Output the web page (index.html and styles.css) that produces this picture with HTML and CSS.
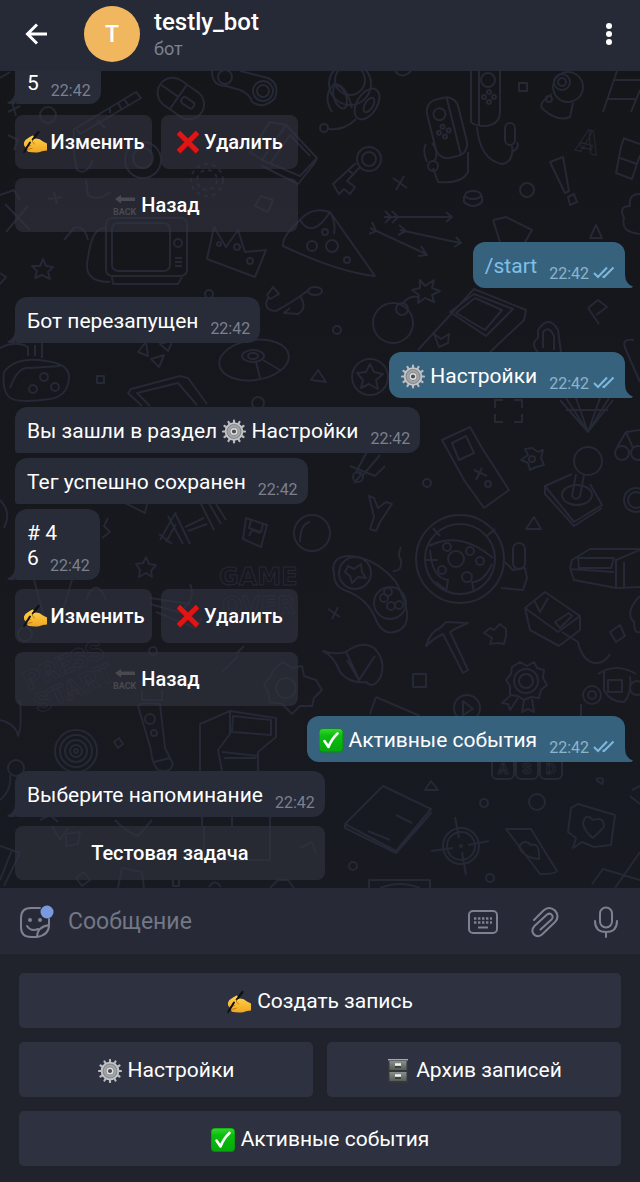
FILE: index.html
```html
<!DOCTYPE html>
<html lang="ru">
<head>
<meta charset="utf-8">
<meta name="viewport" content="width=device-width, initial-scale=1">
<title>testly_bot</title>
<link rel="stylesheet" href="styles.css">
</head>
<body>
<svg class="defs" aria-hidden="true">
  <defs>
    <linearGradient id="skin" x1="0" y1="0" x2="0" y2="1"><stop offset="0" stop-color="#ffd54a"/><stop offset="1" stop-color="#f0a523"/></linearGradient>
    <linearGradient id="green" x1="0" y1="0" x2="0" y2="1"><stop offset="0" stop-color="#35d62c"/><stop offset=".3" stop-color="#0cbd10"/><stop offset="1" stop-color="#06a80c"/></linearGradient>
    <linearGradient id="steel" x1="0" y1="0" x2="0" y2="1"><stop offset="0" stop-color="#8a8f8d"/><stop offset="1" stop-color="#555b59"/></linearGradient>
    <symbol id="hand" viewBox="0 0 24 24">
      <path fill="none" stroke="#111" stroke-width="2.200" stroke-linecap="round" d="M15.500 2 8 12"/>
      <path fill="url(#skin)" d="M1 12.500Q2 9.500 6 7.500L9.500 5.500Q11.500 6 10.500 8L9.500 9.500 13 8.500Q17 8.500 20 11.500L24 13.500V20.500L20 21 16 22.300Q10 22.800 5 21.800 3.500 20.800 4.500 19.500 2 19 3 17.200 .5 16.500 1 12.500Z"/>
      <path fill="none" stroke="#b9700f" stroke-width=".9" stroke-linecap="round" d="M4.500 19.500 9 18.300M3 17 7.500 15.500M9.500 9.500Q8 12 11.500 14"/>
      <path fill="none" stroke="#111" stroke-width="2" stroke-linecap="round" d="M7 12.500 2 20.500"/>
      <path fill="none" stroke="#111" stroke-width="1.600" stroke-linecap="round" d="M15.500 2 9.500 9.500M1.500 21 1 22.500"/>
    </symbol>
    <symbol id="cross" viewBox="0 0 24 24">
      <path fill="none" stroke="#9c0d0d" stroke-width="5.600" d="M2.500 3 21.500 22M21.500 3 2.500 22"/>
      <path fill="none" stroke="#e01616" stroke-width="4.600" d="M2.500 2.500 21.500 21.500M21.500 2.500 2.500 21.500"/>
    </symbol>
    <symbol id="back" viewBox="0 0 24 24">
      <path fill="#484a50" d="M2 6 8 2V4.500H22V8H8V10.500Z"/>
      <text class="back-word" x="0" y="22" fill="#484a52">BACK</text>
    </symbol>
    <symbol id="gear" viewBox="0 0 24 24">
      <g stroke="#b9bbbd" stroke-width="2.200" stroke-linecap="round">
        <path d="M12 1V23M1 12H23M6.500 2.500 17.500 21.500M17.500 2.500 6.500 21.500M2.500 6.500 21.500 17.500M21.500 6.500 2.500 17.500"/>
      </g>
      <circle cx="12" cy="12" r="8.400" fill="#85888b" stroke="#c3c5c7" stroke-width="1.800"/>
      <circle cx="12" cy="12" r="5.400" fill="none" stroke="#a3a6a8" stroke-width="2"/>
      <circle cx="12" cy="12" r="2.800" fill="#4a4d52" stroke="#dfe0e1" stroke-width="1.400"/>
    </symbol>
    <symbol id="check" viewBox="0 0 24 24">
      <rect x="0" y="0" width="24" height="24" rx="4" fill="#068a0d"/>
      <rect x=".5" y=".5" width="23" height="22.500" rx="3.500" fill="url(#green)"/>
      <path fill="none" stroke="#fff" stroke-width="2.600" stroke-linecap="round" stroke-linejoin="round" d="M5.500 12.500 9.500 18.500Q12.500 10.500 18.500 5"/>
    </symbol>
    <symbol id="cabinet" viewBox="0 0 24 24">
      <rect x="2" y="0" width="20" height="24" rx="1" fill="#343937"/>
      <rect x="3.500" y="2" width="17" height="9" fill="url(#steel)"/>
      <rect x="3.500" y="13" width="17" height="9" fill="url(#steel)"/>
      <path d="M2 .7H22" stroke="#a5aaa8" stroke-width="1.400"/>
      <path d="M9 5.500H15M9 16.500H15" stroke="#f2f3f2" stroke-width="2.400"/>
      <path d="M9 8H15M9 19H15" stroke="#2e3331" stroke-width="1.400"/>
    </symbol>
    <symbol id="read" viewBox="0 0 22 14">
      <path fill="none" stroke="#7cb9dc" stroke-width="2" d="M1 8 5 12 14 2.500M9.500 11.500 11 12 20.500 2.500"/>
    </symbol>
    <symbol id="tail" viewBox="0 0 8 14">
      <path fill="currentColor" d="M0 0Q0 10 8 12.500Q7 14 5 14H0Z"/>
    </symbol>
  </defs>
</svg>

<header class="top">
  <button class="icon-btn" type="button" aria-label="Назад">
    <svg width="24" height="24" viewBox="0 0 24 24"><path class="white-line" d="M22 12H3M12 2.500 2.500 12 12 21.500"/></svg>
  </button>
  <span class="avatar">T</span>
  <div class="who">
    <h1 class="name">testly_bot</h1>
    <p class="status">бот</p>
  </div>
  <button class="icon-btn menu" type="button" aria-label="Меню">
    <svg width="8" height="24" viewBox="0 0 8 24" fill="#fff"><circle cx="4" cy="4" r="3"/><circle cx="4" cy="12" r="3"/><circle cx="4" cy="20" r="3"/></svg>
  </button>
</header>

<main class="chat">
  <svg class="wallpaper" viewBox="0 71 640 817" preserveAspectRatio="xMidYMin slice" aria-hidden="true">
    <!-- controllers, mouse, headphones -->
    <path d="M212 71Q212 86 226 86L240 90Q250 94 252 102Q264 110 275 98Q280 84 268 78L240 71"/><circle cx="263" cy="91" r="10"/><circle cx="263" cy="91" r="6"/><circle cx="225" cy="77" r="7"/>
    <g transform="rotate(35 180 98)"><rect x="156" y="83" width="50" height="30" rx="15"/><path d="M178 83V113M156 98H178"/><rect x="182" y="94" width="14" height="7" rx="3"/></g>
    <path d="M136 92 76 128 80 134 141 98ZM124 99 129 106M118 103 122 110M110 107V113M74 128Q72 150 77 170 86 176 93 160M97 120 105 128"/>
    <circle cx="48" cy="115" r="8"/><path d="M8 112 20 106M12 102 16 116M0 78 10 72M8 135 18 140 14 150M86 180 88 195Q98 202 110 192"/>
    <circle cx="143" cy="160" r="18"/><circle cx="143" cy="158" r="10"/>
    <path d="M262 160 286 125 317 158 300 176ZM270 164 290 135 310 156M286 125 270 122 250 152 262 160M317 158 314 164 298 184 262 166"/>
    <g stroke-dasharray="4 4"><circle cx="207" cy="180" r="16"/><circle cx="207" cy="180" r="10"/></g>
    <path d="M255 206 261 196 273 200 268 212ZM48 199 62 197M54 192 57 204M0 195 14 190 20 200M5 204 30 230M28 206 6 232"/>
    <circle cx="350" cy="84" r="21"/><circle cx="350" cy="80" r="15"/><ellipse cx="367" cy="104" rx="10" ry="17" transform="rotate(32 367 104)"/><ellipse cx="369" cy="105" rx="4" ry="8" transform="rotate(32 369 105)"/><path d="M332 112Q322 96 334 84 346 84 352 108M356 119Q344 131 328 129"/><circle cx="324" cy="128" r="4"/><ellipse cx="340" cy="97" rx="6" ry="12" transform="rotate(-20 340 97)"/><path d="M395 71Q402 80 411 71"/>
    <g transform="rotate(-14 446 128)"><rect x="431" y="98" width="32" height="60" rx="12"/><path d="M454 98V158"/><circle cx="443" cy="113" r="6"/><circle cx="443" cy="126" r="2"/><circle cx="438" cy="131" r="2"/><circle cx="448" cy="131" r="2"/><circle cx="443" cy="136" r="2"/></g>
    <path d="M468 152V172Q462 184 438 182L433 168M426 144Q422 150 427 162M432 143Q440 152 434 162"/><circle cx="433" cy="166" r="5"/>
    <path d="M471 71V122Q474 126 486 126 500 124 500 112V71M479 71V125M477 127Q480 160 502 164 514 162 512 146M512 152Q520 148 517 142"/><circle cx="488" cy="80" r="7"/><circle cx="489" cy="92" r="2"/><circle cx="484" cy="97" r="2"/><circle cx="494" cy="97" r="2"/><circle cx="489" cy="102" r="2"/><rect x="505" y="123" width="10" height="22" rx="5"/>
    <rect x="519" y="83" width="8" height="8"/><circle cx="568" cy="87" r="15"/><circle cx="562" cy="82" r="8"/><circle cx="562" cy="82" r="4"/><path d="M552 94Q536 104 544 110 558 122 570 117L573 103"/><circle cx="549" cy="99" r="3"/>
    <path d="M617 71 603 112M640 90 631 112M613 80H640M607 99H636"/>
    <circle cx="369" cy="159" r="12"/><circle cx="369" cy="159" r="7"/><path d="M360 167 347 181 355 187 350 194 344 189 339 194 333 184 356 163M348 170 353 174"/>
    <path d="M393 178 407 188M404 176 396 190"/><circle cx="527" cy="190" r="7"/><ellipse cx="473" cy="195" rx="8" ry="4"/><path d="M464 196V202Q473 210 482 202V196"/>
    <path d="M550 162 563 157 569 191 565 193ZM568 197 574 194 577 202 570 205Z"/><text x="577" y="153" font-size="32" transform="rotate(14 588 143)">A</text>
    <path d="M623 138 640 144M621 147 616 173 632 179 640 155M621 147 624 138M620 158 637 164M640 194Q628 194 630 206 618 206 624 218 620 232 640 234"/>
    <!-- arrows, television, crown, pizza -->
    <path d="M384 217H451M385 211 391 217 385 223M392 211 398 217 392 223M446 212 452 217 446 222M370 228 426 254M372 222 376 231 369 234M421 246 427 255 418 256M400 230 460 243M399 225 406 231 398 235M456 237 461 243 454 247"/>
    <path d="M493 220 506 217 532 230 524 244M493 220 500 242M590 238 596 225 602 238Z"/>
    <rect x="106" y="218" width="81" height="58" rx="6"/><rect x="112" y="223" width="58" height="48" rx="6"/><path d="M112 277 113 284H178L182 277M175 258H182M175 262H182M175 266H182M106 228Q92 226 88 258 82 282 110 282M88 240Q84 224 74 228L64 240"/><circle cx="178" cy="243" r="4"/>
    <path d="M207 259 214 227 226 247 238 230 245 252 266 250 255 277Z"/><circle cx="219" cy="244" r="2"/><circle cx="237" cy="247" r="3"/><circle cx="250" cy="261" r="3"/>
    <path d="M283 246Q282 236 300 220 312 240 330 212L375 276Q338 272 283 246ZM300 220Q312 206 330 212 336 222 334 234"/><circle cx="332" cy="246" r="6"/><circle cx="312" cy="246" r="5"/><circle cx="347" cy="260" r="3"/><circle cx="325" cy="232" r="3"/>
    <path d="M43 259 46 266 53 267 48 272 50 279 42 275 35 278 37 271 32 266 40 266ZM0 273 6 277 0 284"/>
    <path d="M267 295 273 287 279 294 270 299ZM268 298Q262 310 276 311 296 300 310 289M300 296Q308 308 298 314L284 313 290 308"/><ellipse cx="315" cy="291" rx="7" ry="4"/><circle cx="209" cy="294" r="4"/>
    <circle cx="337" cy="330" r="4"/><circle cx="393" cy="323" r="20"/><circle cx="402" cy="309" r="6"/><path d="M403 303Q410 295 418 297M420 280 425 286 434 280 432 288 440 291 432 295 434 302 425 298 418 303 419 295 412 290 420 288Z"/>
    <path d="M418 350 474 289 526 310 524 320 490 352M450 312 474 294 513 309 486 336Z M456 313 475 298 502 310 485 330ZM434 334 441 339 449 334 448 343 439 347Z"/>
    <path d="M588 308 598 300 607 307 596 315M588 308 599 324M538 352Q530 344 538 338V330Q549 314 558 330L561 352M543 348V332Q549 325 554 336V350M634 340Q620 338 626 350L640 382"/><circle cx="370" cy="377" r="18"/><path d="M370 364 374 372 383 374 376 380 378 389 369 384 361 388 363 380 357 373 366 372Z"/>
    <path d="M495 408V400H503M514 400H522V408M522 414V422H514M503 422H495V414M560 400 588 432 613 400M566 398 588 432 600 398M576 398 588 432M609 398 588 432M566 410H608"/>
    <ellipse cx="254" cy="360" rx="35" ry="20" transform="rotate(-8 254 360)"/><ellipse cx="253" cy="356" rx="11" ry="6"/><ellipse cx="253" cy="356" rx="5" ry="3"/><path d="M256 362 260 378M263 360 280 370M138 352 146 342 148 356ZM151 359 164 355 159 367ZM160 344 173 340 168 351Z"/>
    <path d="M0 348Q16 340 28 347V356M35 345V356M42 343V358M4 372Q16 356 46 361 70 364 69 378 68 396 50 399 14 404 8 396 2 388 4 372ZM10 388Q18 366 30 368L60 366"/><circle cx="44" cy="377" r="4"/><circle cx="33" cy="389" r="4"/><circle cx="55" cy="387" r="4"/><rect x="97" y="376" width="7" height="7"/><path d="M142 406 128 393 131 389 180 376 188 378 207 404M150 406 137 393 178 383 197 405"/><circle cx="258" cy="403" r="6"/><path d="M311 380 318 370 326 382Z"/>
    <!-- gem, handhelds, sword, cherries -->
    <path d="M380 455 363 475 356 472 368 450M350 466 375 476 385 466M361 475 354 483"/><circle cx="358" cy="477" r="5"/><path d="M442 440 470 427 482 448 509 490 484 508 464 480ZM452 443 466 436 474 453 459 460ZM476 480 482 468M474 470 487 476"/><circle cx="488" cy="484" r="3"/><path d="M532 448 538 452 543 450 541 458 544 465 536 467 530 470 528 463 521 460 528 455 525 449Z"/><circle cx="532" cy="459" r="3"/>
    <circle cx="588" cy="461" r="14"/><path d="M617 447 626 432 640 430M626 432 633 448M584 475 580 496Q576 502 572 496L576 474"/><circle cx="622" cy="453" r="7"/><circle cx="638" cy="453" r="7"/><path d="M545 486 572 474M590 484 602 505 574 522 545 486V494L574 526 602 508"/><ellipse cx="577" cy="495" rx="15" ry="10"/><circle cx="427" cy="483" r="4"/><circle cx="636" cy="500" r="12"/><circle cx="636" cy="500" r="8"/>
    <path d="M160 540 176 512M166 542 176 524M159 534 172 544M175 513 190 544M168 516 183 544M185 527 204 518M188 531 207 524M200 502 214 530M207 500 221 524M216 504 226 520"/><path d="M246 518 267 525 261 547 243 539ZM251 520 249 528 261 532 263 524M249 536 252 530 260 533"/><circle cx="312" cy="533" r="18"/><path d="M300 542Q300 524 310 522M146 557 149 564 156 565 151 571 152 577 146 573 139 577 140 570 136 564 143 563ZM108 518 104 526 110 532 102 538M0 500Q12 512 4 528M125 503 145 513 147 504"/>
    <text class="wide-word" x="219" y="585" font-size="24">GAME</text><text class="wide-word" x="222" y="614" font-size="24">OVER</text>
    <path d="M34 580 44 616M72 580 60 620M86 600Q96 575 106 600M150 598 190 604M150 604 192 616M156 612 196 628 202 618M190 584Q196 598 184 608"/><circle cx="25" cy="634" r="7"/>
    <text x="28" y="690" font-size="27" transform="rotate(-24 30 688)">PRESS</text><text x="38" y="714" font-size="27" transform="rotate(-24 38 712)">START</text><path d="M222 672 238 656M236 654 244 646M142 690V700H162V690"/><circle cx="153" cy="651" r="4"/><circle cx="286" cy="688" r="10"/><path d="M275 668 283 662 292 668 302 666 304 676 316 680 322 690 314 698 312 706 300 706 292 714 282 704 270 702 268 692 264 684 270 677Z"/>
    <!-- wheel, joypad, console -->
    <path d="M369 496 374 498 378 508 386 502 392 504 380 522 376 531 370 529 374 517ZM526 529 534 517 541 529Z"/><circle cx="460" cy="559" r="44"/><circle cx="460" cy="559" r="35"/><path d="M429 546Q460 530 493 558M430 550Q432 578 448 580L446 592M474 592 472 582Q484 582 492 564M433 528 440 536M487 536 495 529M436 582 446 590M426 560H438"/><circle cx="456" cy="559" r="8"/><circle cx="447" cy="547" r="4"/><circle cx="470" cy="551" r="4"/><circle cx="442" cy="570" r="4"/><circle cx="467" cy="577" r="5"/><circle cx="480" cy="561" r="4"/>
    <path d="M334 574Q330 556 350 556 376 558 396 582 416 620 400 630 384 638 376 620 368 598 344 590 334 586 334 574ZM393 571Q402 572 401 560 397 556 401 547"/><circle cx="355" cy="573" r="16"/><circle cx="390" cy="603" r="16"/><path d="M348 566 354 569 361 564 362 572 366 578 358 577 352 583 350 576 345 572Z"/><circle cx="384" cy="598" r="4"/><circle cx="391" cy="606" r="4"/><circle cx="399" cy="605" r="4"/><circle cx="388" cy="592" r="4"/>
    <rect x="513" y="543" width="12" height="26" rx="6"/><path d="M505 562 513 570 525 568 527 578 523 590 501 588M328 609 340 617M338 607 332 619M570 568 572 560 590 549H640M570 568 574 580 616 588 640 587M578 558H614L611 568H579ZM616 588V560L640 550M570 569 614 572M624 588V562"/>
    <path d="M525 608 545 592 580 616V630L559 646 530 630ZM525 608 558 632 580 616M555 622 569 613 572 616 560 628ZM534 600 540 612 548 598M562 632 578 642Q582 660 594 663 604 664 610 654"/>
    <path d="M426 646Q430 632 440 628L446 622 468 623Q456 628 450 632L468 670 463 673 443 634Q434 638 426 646ZM484 633 490 628 494 630 500 624 506 629V636L504 644 498 643 490 644 492 638ZM610 632 620 625 625 636 616 642ZM640 596Q624 612 634 622 634 634 640 632"/>
    <path d="M323 651Q336 655 346 652 362 640 374 648 386 660 381 676 374 690 366 682 350 684 340 672 334 656 323 651ZM347 660 359 680 375 656M359 680Q350 660 346 652"/><rect x="413" y="674" width="13" height="13"/><circle cx="467" cy="708" r="13"/><path d="M463 701V715L473 709Z"/><circle cx="526" cy="681" r="12"/><circle cx="526" cy="681" r="7"/><path d="M520 662 527 666 534 662 537 668 544 670 543 678 547 685 541 690 539 698 531 697 524 700 518 696 510 695 510 686 506 680 511 674 512 667ZM510 696 502 703 508 704 510 710 518 698M532 699 534 712 528 709 522 712 524 700"/>
    <path d="M598 674Q616 662 636 674M604 672V690Q610 702 624 702 632 694 630 676M608 680H622V692H608ZM581 704V716M376 697 370 714M376 697 420 716"/><circle cx="592" cy="695" r="9"/><circle cx="592" cy="695" r="4"/><circle cx="637" cy="688" r="7"/>
    <!-- arcade, snowboard, laptop, cards -->
    <circle cx="76" cy="751" r="21"/><circle cx="76" cy="751" r="16"/><circle cx="76" cy="751" r="11"/><circle cx="76" cy="751" r="6"/><circle cx="76" cy="751" r="2"/><path d="M138 706Q140 702 160 704L165 748 173 764Q170 774 158 770 152 764 151 750ZM114 742 119 738 123 744 118 748ZM154 762 170 758"/><circle cx="154" cy="733" r="3"/><circle cx="150" cy="719" r="5"/>
    <path d="M200 771V724L230 711 276 718V737L258 752V771M233 716 271 720V735L232 732ZM230 711V734L218 750 222 771M222 752 258 756M224 758H256M202 817V826M232 817V826M270 817V826M0 720Q16 724 18 736 22 730 20 700M0 800Q12 790 10 775M22 812 20 778"/><circle cx="16" cy="768" r="8"/>
    <path d="M204 826V860H270V826M40 820 50 815 58 822M52 826 60 840 68 828M66 834 80 832 78 844 66 846ZM0 846 12 850 0 880M12 850 20 853 4 886M115 820Q126 832 138 836L152 820M76 878 84 872 90 880 82 886ZM118 888 122 868 142 872 144 888M270 888 278 880 288 880 294 888M300 848 312 842 316 854M209 887Q215 878 221 887M173 880V886H179V880"/>
    <path d="M345 824 383 786 431 809 396 851ZM345 824V828L396 853 432 812M396 815 412 823M368 831 390 840M425 790 431 781 438 790Z"/>
    <rect x="492" y="757" width="22" height="22" rx="5"/><rect x="516" y="757" width="22" height="22" rx="5"/><rect x="540" y="757" width="22" height="22" rx="5"/><text x="498" y="774" font-size="15">A</text><text x="522" y="774" font-size="15">S</text><text x="546" y="774" font-size="15">D</text>
    <circle cx="461" cy="846" r="18"/><circle cx="461" cy="846" r="14"/><path d="M455 817 459 838M462 852 466 875M431 851 453 848M468 845 489 841"/><circle cx="461" cy="846" r="1"/><circle cx="537" cy="802" r="8"/><circle cx="484" cy="803" r="4"/><circle cx="353" cy="866" r="4"/><circle cx="490" cy="878" r="4"/>
    <path d="M506 829H531L557 871Q556 874 540 874ZM519 847Q524 838 531 845 540 842 539 859 524 858 519 847ZM571 808 578 804 615 815 611 845 594 847 582 842 573 848 576 838 568 832ZM583 824Q585 812 593 820 604 816 604 827L593 838Q585 832 583 824ZM596 779Q606 776 602 784L596 780M632 790 640 786M630 796 640 804M592 884 603 869 640 880M615 888 640 852M369 888V880H430V888M380 888Q400 880 420 888"/>
  </svg>

  <div class="msg cut"><p class="bubble"><span>5</span><time>22:42</time></p>
    <svg class="tail in" width="8" height="14"><use href="#tail"/></svg></div>
  <div class="actions">
    <button type="button"><svg class="em"><use href="#hand"/></svg>Изменить</button>
    <button type="button"><svg class="em"><use href="#cross"/></svg>Удалить</button>
    <button class="wide" type="button"><svg class="em"><use href="#back"/></svg>Назад</button>
  </div>

  <div class="msg out"><p class="bubble"><a href="#start">/start</a><time>22:42</time><svg class="read"><use href="#read"/></svg></p>
    <svg class="tail" width="8" height="14"><use href="#tail"/></svg></div>

  <div class="msg"><p class="bubble"><span>Бот перезапущен</span><time>22:42</time></p>
    <svg class="tail in" width="8" height="14"><use href="#tail"/></svg></div>

  <div class="msg out"><p class="bubble"><span><svg class="em"><use href="#gear"/></svg> Настройки</span><time>22:42</time><svg class="read"><use href="#read"/></svg></p>
    <svg class="tail" width="8" height="14"><use href="#tail"/></svg></div>

  <div class="msg"><p class="bubble"><span>Вы зашли в раздел <svg class="em"><use href="#gear"/></svg> Настройки</span><time>22:42</time></p></div>
  <div class="msg joined"><p class="bubble"><span>Тег успешно сохранен</span><time>22:42</time></p></div>
  <div class="msg joined"><p class="bubble"><span># 4<br>6</span><time class="tight">22:42</time></p>
    <svg class="tail in" width="8" height="14"><use href="#tail"/></svg></div>
  <div class="actions">
    <button type="button"><svg class="em"><use href="#hand"/></svg>Изменить</button>
    <button type="button"><svg class="em"><use href="#cross"/></svg>Удалить</button>
    <button class="wide" type="button"><svg class="em"><use href="#back"/></svg>Назад</button>
  </div>

  <div class="msg out"><p class="bubble"><span><svg class="em"><use href="#check"/></svg> Активные события</span><time>22:42</time><svg class="read"><use href="#read"/></svg></p>
    <svg class="tail" width="8" height="14"><use href="#tail"/></svg></div>

  <div class="thread">
    <div class="msg"><p class="bubble"><span>Выберите напоминание</span><time>22:42</time></p>
      <svg class="tail in" width="8" height="14"><use href="#tail"/></svg></div>
    <div class="actions"><button class="wide" type="button">Тестовая задача</button></div>
  </div>
</main>

<form class="composer">
  <button class="icon-btn sticker" type="button" aria-label="Стикеры">
    <svg width="36" height="34" viewBox="0 0 36 34">
      <g class="grey-line"><path d="M22 3H13Q3 3 3 13V22Q3 32 13 32H19Q31 30 31 20V14M19 32Q19 22 31 20M9 21Q13 27 20 24"/></g>
      <circle cx="12" cy="15" r="2" fill="#7d8190"/><circle cx="22" cy="15" r="2" fill="#7d8190"/>
      <circle cx="29" cy="7" r="6.500" fill="#7a9ae0"/>
    </svg>
  </button>
  <input class="field" type="text" placeholder="Сообщение" aria-label="Сообщение">
  <button class="icon-btn" type="button" aria-label="Клавиатура">
    <svg width="32" height="32" viewBox="0 0 32 32"><rect class="grey-line" x="3" y="5" width="28" height="22" rx="4"/><path stroke="#7d8190" stroke-width="2.400" stroke-dasharray="2.400 1.600" d="M8 12.500H26M8 16.500H26"/><path stroke="#7d8190" stroke-width="2" d="M12 21.500H22"/></svg>
  </button>
  <button class="icon-btn" type="button" aria-label="Прикрепить">
    <svg width="32" height="32" viewBox="0 0 32 32"><path class="grey-line" d="M6 14 15.500 4.500Q21-.5 27 4.500 32 10.500 27 16L14 28.500Q9.500 32 6 28.500 2.500 24.500 6.500 20L19 8.500Q22 6.500 24 9 25.500 11.500 23.500 13.500L12.500 23.500"/></svg>
  </button>
  <button class="icon-btn" type="button" aria-label="Голосовое сообщение">
    <svg width="32" height="32" viewBox="0 0 32 32"><g class="grey-line"><rect x="10" y="1.500" width="12" height="20" rx="6"/><path d="M5 15Q5 26 16 26T27 15M16 26V31"/></g></svg>
  </button>
</form>

<nav class="keys">
  <button class="wide" type="button"><svg class="em"><use href="#hand"/></svg>Создать запись</button>
  <button type="button"><svg class="em"><use href="#gear"/></svg>Настройки</button>
  <button type="button"><svg class="em"><use href="#cabinet"/></svg>Архив записей</button>
  <button class="wide" type="button"><svg class="em"><use href="#check"/></svg>Активные события</button>
</nav>
</body>
</html>
```
FILE: styles.css
```css
* { box-sizing: border-box; }

body {
  margin: 0;
  min-height: 100vh;
  display: flex;
  flex-direction: column;
  background: #20232c;
  color: #fff;
  font: 21px/25px Roboto, "Noto Sans", sans-serif;
}

button {
  border: 0;
  padding: 0;
  color: inherit;
  font: inherit;
  background: none;
  cursor: pointer;
}

h1, p { margin: 0; }

.defs { position: absolute; width: 0; height: 0; }

.white-line { fill: none; stroke: #fff; stroke-width: 3; }
.grey-line { fill: none; stroke: #7d8190; stroke-width: 2; stroke-linecap: round; }
.back-word { font: 700 9px Roboto, sans-serif; }

.em { width: 24px; height: 24px; flex: none; }
.icon-btn { display: flex; align-items: center; justify-content: center; }

/* header */
.top {
  display: flex;
  align-items: center;
  height: 71px;
  padding: 0 27px 3px 25px;
  background: #262a36;
}
.avatar {
  display: grid;
  place-items: center;
  width: 56px;
  height: 56px;
  margin-left: 35px;
  border-radius: 50%;
  background: #f0b75f;
  font-size: 23px;
  font-weight: 500;
}
.who { flex: 1; margin-left: 14px; padding-top: 2px; }
.name { font-size: 24px; line-height: 27px; font-weight: 500; }
.status { font-size: 18px; line-height: 26px; color: #7d8190; }

/* conversation */
.chat {
  position: relative;
  flex: 1;
  display: flex;
  flex-direction: column;
  align-items: flex-start;
  gap: 9px;
  padding: 0 15px 7px;
  overflow: hidden;
  background: linear-gradient(#14161a, #181a21);
}
.wallpaper {
  position: absolute;
  inset: 0;
  width: 100%;
  height: 100%;
  fill: none;
  stroke: #252835;
  stroke-width: 2;
  stroke-linejoin: round;
}
.wallpaper text { font-family: Roboto, sans-serif; font-weight: 900; stroke-width: 1; }
.wallpaper .wide-word { font-family: "DejaVu Sans", sans-serif; font-weight: 700; }

.msg { position: relative; width: fit-content; color: #282b38; }
.msg.out { align-self: flex-end; color: #37627e; }
.msg.joined { margin-top: -4px; }
.bubble {
  display: flex;
  align-items: flex-end;
  padding: 12px 10px 9px 12px;
  border-radius: 12px 12px 12px 3px;
  background: currentColor;
}
.bubble > span { color: #fff; }
.bubble > a { color: #7fc0e8; text-decoration: none; }
.out .bubble { border-radius: 12px 12px 0 12px; }
.cut .bubble { padding-top: 0; padding-bottom: 8px; border-radius: 0 0 12px 3px; }
.bubble .em { height: 25px; vertical-align: top; }
.bubble time {
  margin: 0 0 -5px 12px;
  font-size: 16px;
  line-height: 20px;
  color: #7c808d;
}
.bubble .tight { margin-left: -7px; }
.out time { color: #8db4cb; }
.read { width: 22px; height: 14px; margin-left: 4px; }

.tail { position: absolute; left: 100%; bottom: 0; }
.tail.in { left: auto; right: 100%; transform: scaleX(-1); }

.actions {
  position: relative;
  display: grid;
  grid-template-columns: 1fr 1fr;
  gap: 9px;
  min-width: 283px;
  margin-bottom: 1px;
}
.cut + .actions { margin-top: 2px; }
.thread { display: grid; gap: 9px; }
.actions button {
  display: flex;
  align-items: center;
  justify-content: center;
  gap: 4px;
  height: 54px;
  border-radius: 8px;
  background: rgba(50, 52, 65, .6);
  font-size: 20px;
  font-weight: 500;
}
.actions .wide, .keys .wide { grid-column: 1 / -1; }

/* message field */
.composer {
  display: flex;
  align-items: center;
  gap: 30px;
  height: 66px;
  padding: 2px 18px 0;
  background: #272a36;
}
.field {
  flex: 1;
  min-width: 0;
  margin-left: -16px;
  padding: 0;
  border: 0;
  outline: 0;
  background: none;
  color: #fff;
  font: 23px/30px Roboto, "Noto Sans", sans-serif;
}
.field::placeholder { color: #737786; opacity: 1; }

/* reply keyboard */
.keys {
  display: grid;
  grid-template-columns: 1fr 1fr;
  gap: 14px;
  padding: 19px 19px 16px;
}
.keys button {
  display: flex;
  align-items: center;
  justify-content: center;
  gap: 6px;
  height: 55px;
  padding-top: 2px;
  border-radius: 5px;
  background: #2e3240;
}
```
